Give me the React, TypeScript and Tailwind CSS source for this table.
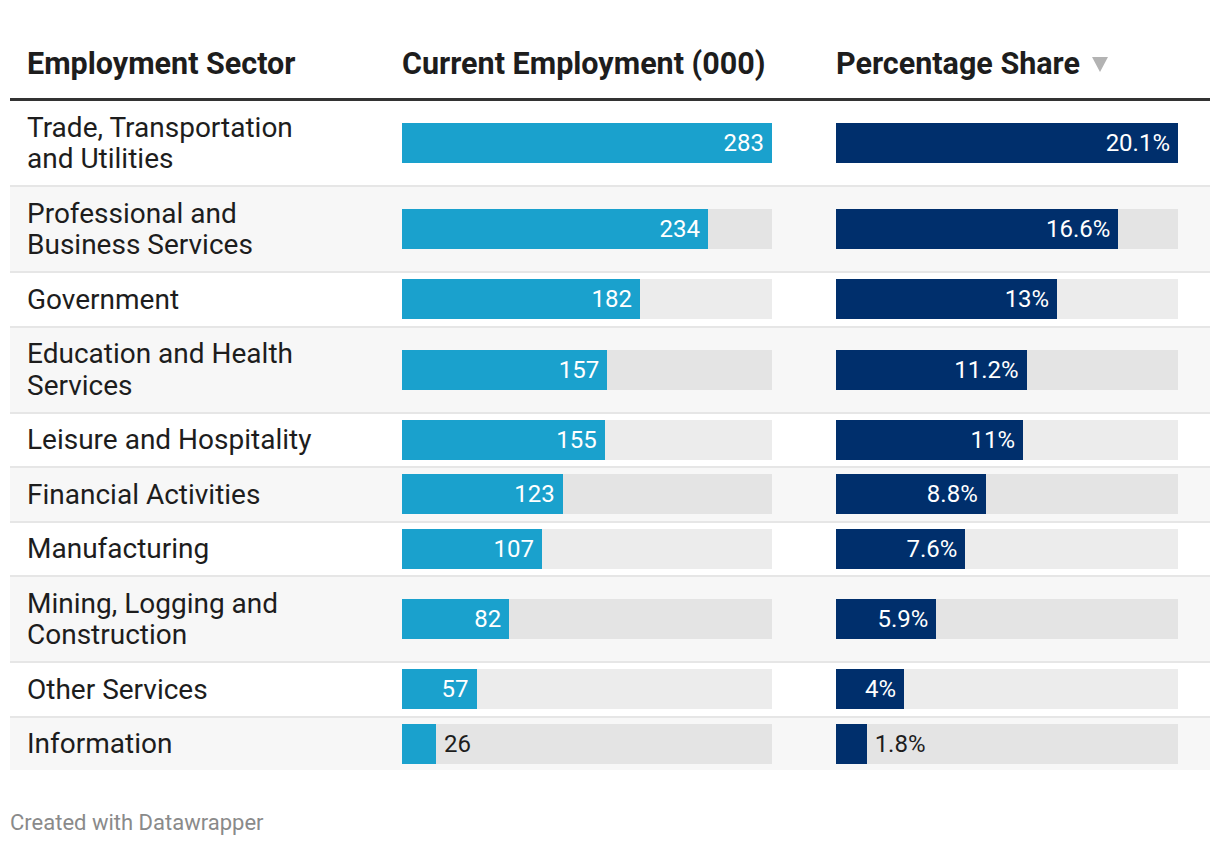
interface Row {
  sector: string[];
  jobs: number;
  share: number;
  shareLabel: string;
}

const rows: Row[] = [
  { sector: ['Trade, Transportation', 'and Utilities'], jobs: 283, share: 20.1, shareLabel: '20.1%' },
  { sector: ['Professional and', 'Business Services'], jobs: 234, share: 16.6, shareLabel: '16.6%' },
  { sector: ['Government'], jobs: 182, share: 13, shareLabel: '13%' },
  { sector: ['Education and Health', 'Services'], jobs: 157, share: 11.2, shareLabel: '11.2%' },
  { sector: ['Leisure and Hospitality'], jobs: 155, share: 11, shareLabel: '11%' },
  { sector: ['Financial Activities'], jobs: 123, share: 8.8, shareLabel: '8.8%' },
  { sector: ['Manufacturing'], jobs: 107, share: 7.6, shareLabel: '7.6%' },
  { sector: ['Mining, Logging and', 'Construction'], jobs: 82, share: 5.9, shareLabel: '5.9%' },
  { sector: ['Other Services'], jobs: 57, share: 4, shareLabel: '4%' },
  { sector: ['Information'], jobs: 26, share: 1.8, shareLabel: '1.8%' },
];

const Bar = ({ value, max, label, color }: { value: number; max: number; label: string; color: string }) => {
  const pct = (value / max) * 100;
  const inside = pct > 14;
  return (
    <div className="h-10 w-full bg-black/[0.075] flex text-[24px] leading-10">
      <div className={`h-10 flex items-center justify-end ${color}`} style={{ width: `${pct}%` }}>
        {inside && <span className="text-white pr-2">{label}</span>}
      </div>
      {!inside && <span className="pl-2 text-[#1d1d1d]">{label}</span>}
    </div>
  );
};

export default function App() {
  return (
    <div className="w-[1220px] bg-white px-[10px] pt-[30px] text-[#1d1d1d]" style={{ fontFamily: 'Roboto, "Noto Sans", sans-serif' }}>
      <div className="grid grid-cols-[392px_434px_374px] border-b-[3px] border-[#333] items-center h-[71px] text-[30.5px] leading-none font-bold">
        <div className="pl-[17px]">Employment Sector</div>
        <div>Current Employment (000)</div>
        <div className="flex items-center gap-[12px]">
          Percentage Share
          <svg width="16" height="15" viewBox="0 0 16 15" className="mt-[1px]">
            <polygon points="0,0 16,0 8,15" fill="#b3b3b3" />
          </svg>
        </div>
      </div>

      <div className="text-[28px] leading-[31.5px]">
        {rows.map((row, i) => (
          <div
            key={i}
            className={`grid grid-cols-[392px_434px_374px] items-center ${i % 2 === 1 ? 'bg-[#f7f7f7]' : 'bg-white'} ${i < rows.length - 1 ? 'border-b-2 border-[#e6e6e6]' : ''}`}
          >
            <div className="pl-[17px] py-[10.5px]">
              {row.sector.map((line, j) => (
                <div key={j}>{line}</div>
              ))}
            </div>
            <div className="pr-[64px]">
              <Bar value={row.jobs} max={283} label={String(row.jobs)} color="bg-[#1aa1cd]" />
            </div>
            <div className="pr-[32px]">
              <Bar value={row.share} max={20.1} label={row.shareLabel} color="bg-[#002f6c]" />
            </div>
          </div>
        ))}
      </div>

      <div className="mt-[40px] text-[22px] leading-[26px] text-[#8a8a8a]">Created with Datawrapper</div>
    </div>
  );
}
